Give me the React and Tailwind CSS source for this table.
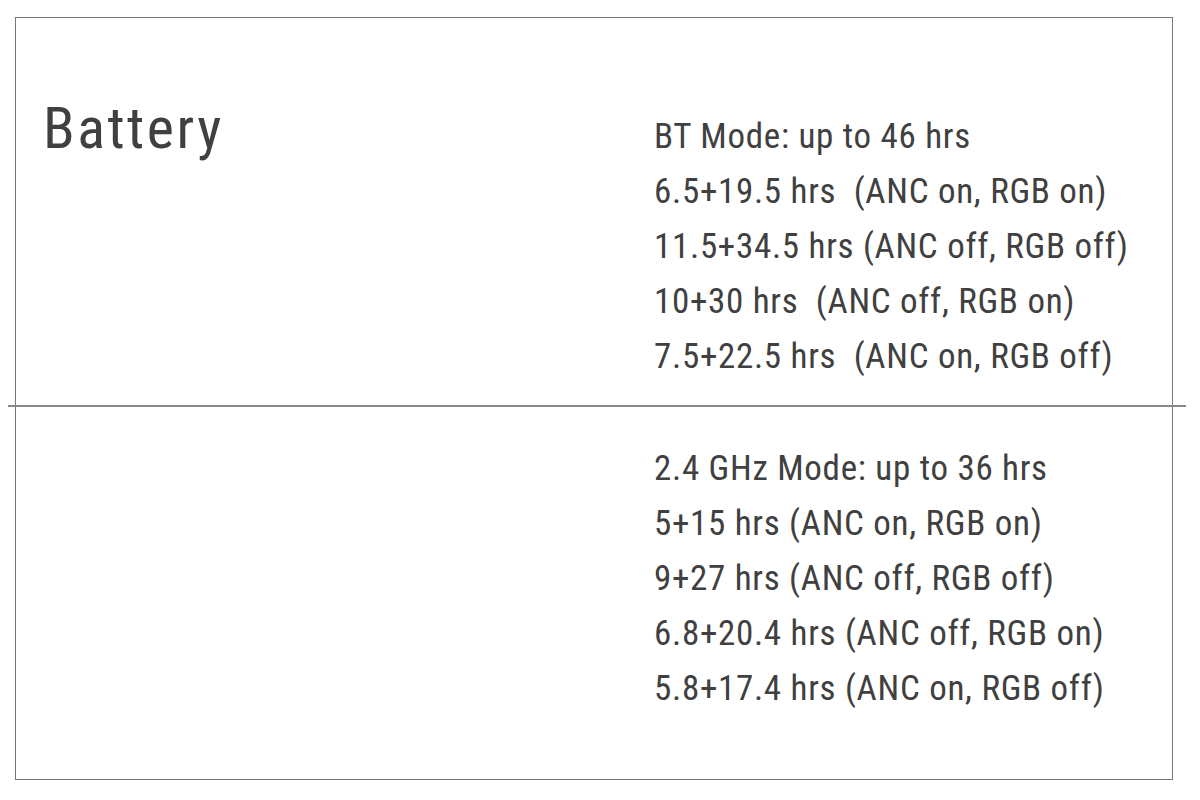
import React from "react";

const btLines = [
  "BT Mode: up to 46 hrs",
  "6.5+19.5 hrs\u00a0 (ANC on, RGB on)",
  "11.5+34.5 hrs (ANC off, RGB off)",
  "10+30 hrs\u00a0 (ANC off, RGB on)",
  "7.5+22.5 hrs\u00a0 (ANC on, RGB off)",
];

const ghzLines = [
  "2.4 GHz Mode: up to 36 hrs",
  "5+15 hrs (ANC on, RGB on)",
  "9+27 hrs (ANC off, RGB off)",
  "6.8+20.4 hrs (ANC off, RGB on)",
  "5.8+17.4 hrs (ANC on, RGB off)",
];

const App = () => {
  return (
    <div className="w-[1200px] h-[800px] bg-white pt-[17px] pl-[15px] font-['Roboto',sans-serif] text-[#404040]">
      <div className="w-[1158px] h-[763px] border border-[#777]">
        {/* BT mode row */}
        <div className="flex h-[387px]">
          <div className="w-[638px] pl-[27px] pt-[82px]">
            <h2 className="text-[58px] leading-[57px] tracking-[2.5px] [font-stretch:condensed]">Battery</h2>
          </div>
          <div className="pt-[91px] text-[35px] leading-[55px] tracking-[0.7px] [font-stretch:condensed]">
            {btLines.map((l) => (
              <p key={l} className="whitespace-pre">{l}</p>
            ))}
          </div>
        </div>

        <div className="-ml-[8px] w-[1178px] border-t-2 border-[#888]" />

        {/* 2.4 GHz row */}
        <div className="flex">
          <div className="w-[638px]" />
          <div className="pt-[34px] text-[35px] leading-[55px] tracking-[0.7px] [font-stretch:condensed]">
            {ghzLines.map((l) => (
              <p key={l} className="whitespace-pre">{l}</p>
            ))}
          </div>
        </div>
      </div>
    </div>
  );
};

export default App;
